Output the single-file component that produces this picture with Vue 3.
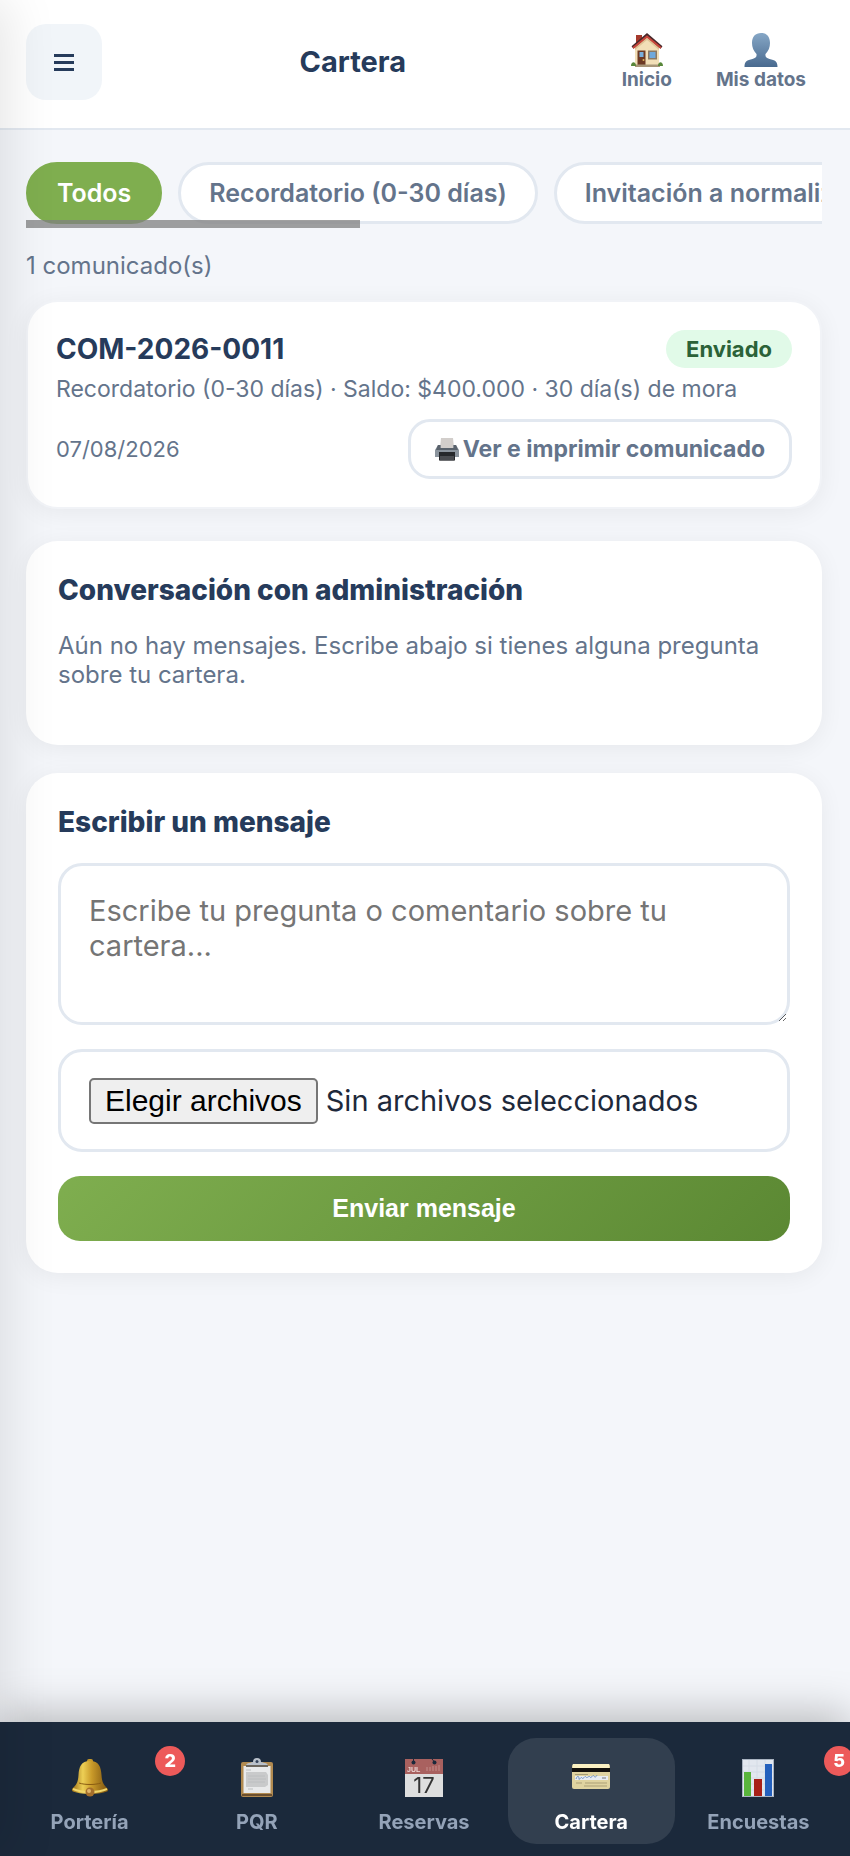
<script setup>
import { ref, computed } from 'vue'

const filters = ['Todos', 'Recordatorio (0-30 días)', 'Invitación a normalizar (31-60 días)', 'Prejurídico (61-90 días)']
const filter = ref('Todos')

const notices = [
  {
    id: 'COM-2026-0011',
    kind: 'Recordatorio (0-30 días)',
    balance: '$400.000',
    days: 30,
    date: '07/08/2026',
    status: 'Enviado',
  },
]
const visible = computed(() =>
  notices.filter((n) => filter.value === 'Todos' || n.kind === filter.value),
)

const message = ref('')
const files = ref([])
const fileText = computed(() =>
  files.value.length ? files.value.join(', ') : 'Sin archivos seleccionados',
)
const pick = (e) => {
  files.value = [...e.target.files].map((f) => f.name)
}

const nav = [
  { key: 'bell', label: 'Portería', badge: 2 },
  { key: 'clip', label: 'PQR' },
  { key: 'cal', label: 'Reservas' },
  { key: 'card', label: 'Cartera' },
  { key: 'chart', label: 'Encuestas', badge: 5 },
]
const current = ref('card')
</script>

<template>
  <div class="page">
    <header class="top">
      <button class="menu" type="button" aria-label="Menú">
        <svg viewBox="0 0 24 24" width="24" height="24">
          <path d="M2 5.5h20M2 12.5h20M2 19.5h20" stroke="#263b5b" stroke-width="3" />
        </svg>
      </button>
      <h1>Cartera</h1>
      <nav class="links">
        <a href="#inicio">
          <svg viewBox="0 0 36 36" width="36" height="36">
            <path d="M7 3h6v10H7z" fill="#a63a2c" />
            <path d="M6 14 18 4l12 10v20H6z" fill="#f2dfb7" />
            <path d="M6 14 18 4l12 10v4L18 8 6 18z" fill="#dfc496" />
            <path d="M3.500 15.500 18 3l14.500 12.500" fill="none" stroke="#47282a" stroke-width="3" />
            <path d="M4 16 18 4.500 32 16" fill="none" stroke="#c8453b" stroke-width="2" />
            <path d="M8.500 18.500h8V34h-8z" fill="#6d3a24" />
            <path d="M10.500 20h4v5h-4z" fill="#79afdc" />
            <path d="M19 18.500h9v9h-9z" fill="#8b7963" />
            <path d="M20.500 20h6v6h-6z" fill="#6fa9dc" />
            <circle cx="14.500" cy="28" r="1" fill="#e0b860" />
            <path d="M6 32.500h25V35H6z" fill="#a89678" />
            <path d="M2 34c0-5 5-5 5 0zM29 34c0-5 5-5 5 0z" fill="#58873a" />
          </svg>
          <span>Inicio</span>
        </a>
        <a href="#datos">
          <svg viewBox="0 0 36 36" width="36" height="36">
            <defs>
              <linearGradient id="person" x1="0" y1="0" x2="0" y2="1">
                <stop offset="0" stop-color="#86a7c6" />
                <stop offset="1" stop-color="#496a8f" />
              </linearGradient>
            </defs>
            <path
              d="M18 1c-5.500 0-9 3.500-9 10 0 4 1.500 8 4.500 11 .500 3-1 4-4 5C4 28.500 1.500 29 1.500 35h33c0-6-2.500-6.500-8-8-3-1-4.500-2-4-5 3-3 4.500-7 4.500-11 0-6.500-3.500-10-9-10z"
              fill="url(#person)"
            />
          </svg>
          <span>Mis datos</span>
        </a>
      </nav>
    </header>

    <main class="content">
      <div class="filter-wrap">
        <div class="filters">
          <button
            v-for="f in filters"
            :key="f"
            type="button"
            class="pill"
            :class="{ on: filter === f }"
            @click="filter = f"
          >
            {{ f }}
          </button>
        </div>
        <div class="thumb"></div>
      </div>

      <p class="count">{{ visible.length }} comunicado(s)</p>

      <article v-for="n in visible" :key="n.id" class="card notice">
        <div class="row">
          <h2>{{ n.id }}</h2>
          <span class="status">{{ n.status }}</span>
        </div>
        <p class="meta">{{ n.kind }} · Saldo: {{ n.balance }} · {{ n.days }} día(s) de mora</p>
        <div class="row">
          <time>{{ n.date }}</time>
          <button class="print" type="button">
            <svg viewBox="0 0 24 24" width="24" height="24">
              <path d="M6 1h12l1 10H5z" fill="#d2cecb" />
              <path d="M3 8h2.500v3h13V8H21l3 5v7H0v-7z" fill="#8b949d" />
              <path d="M3 8h2.500v3h13V8H21l2 5H1z" fill="#59626c" />
              <path d="M4 15h16v8.500H4z" fill="#26282b" />
              <path d="M5 19h14v4.500H5z" fill="#4a4c50" />
            </svg>
            <span>Ver e imprimir comunicado</span>
          </button>
        </div>
      </article>

      <section class="card talk">
        <h2>Conversación con administración</h2>
        <p>Aún no hay mensajes. Escribe abajo si tienes alguna pregunta sobre tu cartera.</p>
      </section>

      <form class="card compose" @submit.prevent>
        <h2><label for="message">Escribir un mensaje</label></h2>
        <textarea
          id="message"
          v-model="message"
          placeholder="Escribe tu pregunta o comentario sobre tu cartera..."
        ></textarea>
        <label class="file">
          <input type="file" multiple @change="pick" />
          <span class="choose">Elegir archivos</span>
          <span>{{ fileText }}</span>
        </label>
        <button class="send" type="submit">Enviar mensaje</button>
      </form>
    </main>

    <nav class="bottom">
      <a
        v-for="n in nav"
        :key="n.key"
        :href="'#' + n.key"
        class="item"
        :class="{ on: current === n.key }"
        @click="current = n.key"
      >
        <svg v-if="n.key === 'bell'" viewBox="0 0 40 40" width="40" height="40">
          <defs>
            <linearGradient id="gold" x1="0" x2="1">
              <stop offset="0" stop-color="#9a6d16" />
              <stop offset=".3" stop-color="#edcf55" />
              <stop offset=".55" stop-color="#c99a29" />
              <stop offset="1" stop-color="#7c5310" />
            </linearGradient>
          </defs>
          <rect x="17" y="1" width="6" height="5" rx="2" fill="#c99a29" />
          <path d="M20 3c-9 0-11 6-11.500 14C8 25 6 27 2 31v2c8 4 28 4 36 0v-2c-4-4-6-6-6.500-14C31 9 29 3 20 3z" fill="url(#gold)" />
          <path d="M3 31c9 4 25 4 34 0" fill="none" stroke="#f1d76c" stroke-width="2" />
          <path d="M9 25c6 2 16 2 22 0" fill="none" stroke="#8a5c12" stroke-width="1" />
          <circle cx="20" cy="34" r="4.500" fill="#a56f2b" />
          <circle cx="19" cy="33" r="2" fill="#e0b46c" />
        </svg>
        <svg v-else-if="n.key === 'clip'" viewBox="0 0 40 40" width="40" height="40">
          <rect x="4" y="4" width="32" height="35" rx="2" fill="#b18a50" />
          <path d="M5 36h30v2H5z" fill="#6c5030" />
          <path d="M6.500 8h27v27h-27z" fill="#e9eaeb" />
          <path d="M9 14h20l2 3v10l-3 2H9z" fill="#c9cacb" />
          <path d="M9 12h5M11 18h17M11 21h18M11 24h17M11 31h5" stroke="#bcbec0" stroke-width="1" />
          <path d="M9 8c0-3 3-3 7-4a4 4 0 0 1 8 0c4 1 7 1 7 4z" fill="#b9c0ca" />
          <path d="M9 7h22v2H9z" fill="#6b665e" />
          <circle cx="20" cy="3.500" r="1.500" fill="#35435a" />
        </svg>
        <svg v-else-if="n.key === 'cal'" viewBox="0 0 40 40" width="40" height="40">
          <path d="M1 1h38v38H1z" fill="#dedede" />
          <path d="M1 1h38v15H1z" fill="#a9615f" />
          <circle cx="9.500" cy="4.500" r="2" fill="#1b293b" />
          <circle cx="30.500" cy="4.500" r="2" fill="#1b293b" />
          <path d="M9.500 4V1M28 1l2.500 3" stroke="#1b293b" stroke-width="1" />
          <path d="M23 13V9m3 4V9m3 4V8m3 5V8m3 5V7" stroke="#c58e8b" stroke-width="1" />
          <text x="3" y="14" class="month">JUL</text>
          <text x="20" y="35" text-anchor="middle" class="day">17</text>
        </svg>
        <svg v-else-if="n.key === 'card'" viewBox="0 0 40 40" width="40" height="40">
          <rect x="1" y="6" width="38" height="25" rx="2" fill="#dfd3a0" />
          <path d="M2 6h36v4H2z" fill="#faf0c2" />
          <path d="M1 10h38v4H1z" fill="#12100c" />
          <path d="M4 18h33v4H4z" fill="#e8edf2" />
          <path d="M5 21c2-5 3-2 3 0s2-3 3-1 3-3 4-1 3-2 4 0 3-3 4-1 2 1 3-1" fill="none" stroke="#6d91c2" stroke-width="1" />
          <path d="M31 20h4" stroke="#777" stroke-width="1" />
          <path d="M4 16.500h13" stroke="#a49b75" stroke-width="1" />
          <path d="M5 25h6M14 25h22M13 28h23" stroke="#c5b98b" stroke-width="2" />
        </svg>
        <svg v-else viewBox="0 0 40 40" width="40" height="40">
          <path d="M4 1h32v38H4z" fill="#a9b3c1" />
          <path d="M5 2h30v36H5z" fill="#e2e7ef" />
          <path d="M5 8h30M5 14h30M5 20h30M5 26h30M5 32h30M11 2v36M19 2v36M27 2v36" stroke="#d5dce6" stroke-width="1" />
          <path d="M6 14h7v24H6z" fill="#59b53c" />
          <path d="M16 21h8v17h-8z" fill="#a82018" />
          <path d="M27 6h7v32h-7z" fill="#2460bd" />
        </svg>
        <span>{{ n.label }}</span>
        <b v-if="n.badge" class="badge">{{ n.badge }}</b>
      </a>
    </nav>

    <aside class="drawer" aria-hidden="true"></aside>
  </div>
</template>

<style>
body {
  background: #f4f6fa;
}
</style>

<style scoped>
.page {
  min-height: 100vh;
  box-sizing: border-box;
  padding-bottom: 134px;
  overflow-x: hidden;
  font-family: Inter, 'Liberation Sans', sans-serif;
  color: #1e293b;
}
.page * {
  box-sizing: border-box;
}
h1,
h2,
p {
  margin: 0;
}
button,
textarea {
  font: inherit;
}
button {
  cursor: pointer;
}
a {
  text-decoration: none;
}
svg {
  display: block;
  flex: none;
}
.top {
  display: flex;
  align-items: flex-start;
  padding: 24px 26px 28px;
  background: #fff;
  border-bottom: 2px solid #e2e8f0;
}
.menu {
  display: grid;
  place-items: center;
  width: 76px;
  height: 76px;
  border: 0;
  border-radius: 20px;
  background: #f1f5f9;
}
h1 {
  flex: 1;
  text-align: center;
  font-size: 29px;
  line-height: 76px;
  font-weight: 700;
  color: #263b5b;
}
.links {
  display: flex;
  gap: 8px;
}
.links a {
  display: flex;
  flex-direction: column;
  align-items: center;
  padding: 8px 18px;
  font-size: 19px;
  line-height: 24px;
  font-weight: 700;
  color: #64748b;
}
.content {
  padding: 32px 28px 32px 26px;
}
.filter-wrap {
  position: relative;
  padding-bottom: 4px;
}
.filters {
  display: flex;
  gap: 16px;
  overflow-x: auto;
  scrollbar-width: none;
}
.pill {
  flex: none;
  height: 62px;
  padding: 0 28px;
  border: 3px solid #e2e8f0;
  border-radius: 31px;
  background: #fff;
  font-size: 25px;
  font-weight: 600;
  color: #64748b;
  white-space: nowrap;
}
.pill.on {
  border-color: #7fae4f;
  background: #7fae4f;
  color: #fff;
}
.thumb {
  position: absolute;
  left: 0;
  bottom: 0;
  width: 42%;
  height: 8px;
  background: rgba(128, 128, 128, 0.75);
}
.count {
  margin: 24px 0 20px;
  font-size: 24px;
  line-height: 28px;
  color: #64748b;
}
.card {
  border-radius: 32px;
  background: #fff;
  box-shadow: 0 4px 24px rgba(0, 0, 0, 0.06);
}
h2 {
  font-size: 28px;
  line-height: 34px;
  font-weight: 800;
  color: #263b5b;
}
.notice {
  margin-bottom: 32px;
  padding: 28px;
  border: 2px solid #f1f3f7;
}
.notice h2 {
  font-weight: 700;
}
.row {
  display: flex;
  align-items: center;
  justify-content: space-between;
}
.status {
  padding: 0 20px;
  border-radius: 19px;
  background: #e1fae8;
  font-size: 22px;
  line-height: 38px;
  font-weight: 700;
  color: #2b6238;
}
.meta {
  margin: 8px 0 16px;
  font-size: 23px;
  line-height: 27px;
  color: #64748b;
}
time {
  font-size: 22px;
  color: #64748b;
}
.print {
  display: flex;
  align-items: center;
  gap: 4px;
  height: 60px;
  padding: 0 24px;
  border: 3px solid #e2e8f0;
  border-radius: 22px;
  background: #fff;
  font-size: 23px;
  font-weight: 700;
  color: #64748b;
}
.talk {
  margin-bottom: 28px;
  padding: 32px 32px 56px;
}
.talk p {
  margin-top: 24px;
  font-size: 24px;
  line-height: 29px;
  color: #64748b;
}
.compose {
  display: flex;
  flex-direction: column;
  gap: 24px;
  padding: 32px;
}
textarea {
  display: block;
  width: 100%;
  height: 162px;
  padding: 27px 28px;
  border: 3px solid #e2e8f0;
  border-radius: 24px;
  background: #fff;
  font-size: 29px;
  line-height: 35px;
  color: #1e293b;
}
textarea::placeholder {
  color: #757575;
}
.file {
  display: flex;
  align-items: center;
  gap: 8px;
  height: 103px;
  padding: 0 28px;
  border: 3px solid #e2e8f0;
  border-radius: 24px;
  font-size: 29px;
}
.file input {
  position: absolute;
  width: 1px;
  height: 1px;
  opacity: 0;
}
.choose {
  padding: 0 14px;
  border: 2px solid #767676;
  border-radius: 5px;
  background: #efefef;
  font-family: 'Liberation Sans', Arial, sans-serif;
  font-size: 30px;
  line-height: 42px;
  color: #000;
}
.send {
  height: 65px;
  border: 0;
  border-radius: 22px;
  background: linear-gradient(135deg, #7fae4f, #5b8833);
  font-family: 'Liberation Sans', Arial, sans-serif;
  font-size: 25px;
  font-weight: 700;
  color: #fff;
}
.bottom {
  position: fixed;
  left: 0;
  right: 0;
  bottom: 0;
  display: flex;
  padding: 16px 8px 12px 6px;
  background: #1b293b;
  box-shadow: 0 -8px 40px rgba(0, 0, 0, 0.25);
}
.item {
  position: relative;
  display: flex;
  flex: 1 1 0;
  flex-direction: column;
  align-items: center;
  gap: 12px;
  height: 106px;
  padding-top: 20px;
  border-radius: 28px;
  font-size: 20px;
  line-height: 24px;
  font-weight: 700;
  color: #94a3b8;
}
.item.on {
  background: #323f4f;
  color: #fff;
}
.badge {
  position: absolute;
  top: 8px;
  right: -12px;
  width: 30px;
  border-radius: 15px;
  background: #ed5a5a;
  font-size: 18px;
  line-height: 30px;
  font-weight: 800;
  text-align: center;
  color: #fff;
}
.month {
  font: 700 7px 'Liberation Sans', sans-serif;
  fill: #ecd5d3;
}
.day {
  font: 400 22px Inter, sans-serif;
  fill: #333;
}
/* closed side menu, only its shadow reaches the page */
.drawer {
  position: fixed;
  top: 0;
  bottom: 0;
  left: -300px;
  width: 300px;
  box-shadow: 8px 0 48px rgba(0, 0, 0, 0.1);
}
</style>
